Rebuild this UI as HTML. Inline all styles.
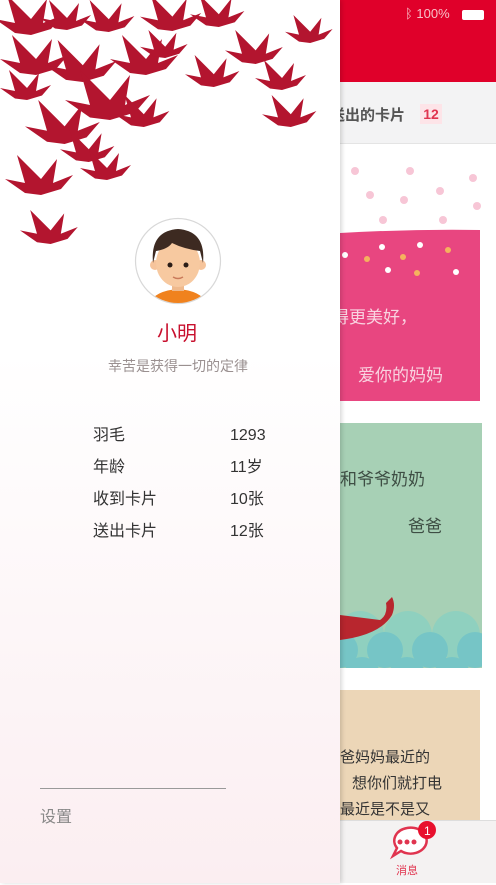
<!DOCTYPE html>
<html><head><meta charset="utf-8"><style>
*{margin:0;padding:0;box-sizing:border-box}
body{width:496px;height:883px;position:relative;overflow:hidden;font-family:"Liberation Sans","Noto Sans CJK SC",sans-serif;background:#fff}
.a{position:absolute}
</style></head><body>
<div class="a" style="left:340px;top:0;width:156px;height:82px;background:#e0002a"></div>
<div class="a" style="left:405px;top:6px;color:#f7c0c8;font-size:13px">ᛒ 100%</div>
<div class="a" style="left:462px;top:10px;width:22px;height:10px;background:#fff;border-radius:2px"></div>
<div class="a" style="left:340px;top:82px;width:156px;height:62px;background:#f3f3f4;border-bottom:1px solid #e4e4e4"></div>
<div class="a" style="left:330px;top:104px;font-size:15px;color:#555;font-weight:bold">送出的卡片</div>
<div class="a" style="left:420px;top:104px;width:22px;height:20px;background:#fde4e8;color:#e0344f;font-size:14px;font-weight:bold;text-align:center;line-height:20px">12</div>
<svg class="a" style="left:340px;top:145px" width="156" height="740">
<defs><clipPath id="cc"><rect x="0" y="278" width="142" height="245"/></clipPath></defs>
<g fill="#f7c6d6"><circle cx="15" cy="26" r="4"/><circle cx="70" cy="26" r="4"/><circle cx="133" cy="33" r="4"/><circle cx="30" cy="50" r="4"/><circle cx="64" cy="55" r="4"/><circle cx="100" cy="46" r="4"/><circle cx="137" cy="61" r="4"/><circle cx="43" cy="75" r="4"/><circle cx="103" cy="75" r="4"/></g>
<path d="M0 88 Q70 84 140 85 L140 256 L0 256Z" fill="#e84680"/>
<g fill="#fff"><circle cx="42" cy="102" r="3"/><circle cx="80" cy="100" r="3"/><circle cx="5" cy="110" r="3"/><circle cx="48" cy="125" r="3"/><circle cx="116" cy="127" r="3"/></g>
<g fill="#f5b25e"><circle cx="27" cy="114" r="3"/><circle cx="63" cy="112" r="3"/><circle cx="108" cy="105" r="3"/><circle cx="77" cy="128" r="3"/></g>
<text x="-8" y="178" fill="#f9d3e0" font-size="17" font-family="Noto Sans CJK SC">得更美好，</text>
<text x="18" y="236" fill="#f9d3e0" font-size="17" font-family="Noto Sans CJK SC">爱你的妈妈</text>
<rect x="0" y="278" width="142" height="245" fill="#a7d0b5"/>
<g clip-path="url(#cc)">
<g fill="#8fd0bf"><circle cx="20" cy="490" r="24"/><circle cx="68" cy="490" r="24"/><circle cx="116" cy="490" r="24"/></g>
<g fill="#76c5c6"><circle cx="0" cy="505" r="18"/><circle cx="45" cy="505" r="18"/><circle cx="90" cy="505" r="18"/><circle cx="135" cy="505" r="18"/><circle cx="22" cy="530" r="18"/><circle cx="67" cy="530" r="18"/><circle cx="112" cy="530" r="18"/></g>
<path d="M0 470 L40 475 Q48 470 46 458 L52 452 Q56 460 52 470 Q40 490 0 495Z" fill="#b8262e"/>
</g>
<text x="0" y="340" fill="#3e4e44" font-size="17" font-family="Noto Sans CJK SC">和爷爷奶奶</text>
<text x="68" y="387" fill="#3e4e44" font-size="17" font-family="Noto Sans CJK SC">爸爸</text>
<rect x="0" y="545" width="140" height="130" fill="#ecd6b7"/>
<text x="0" y="617" fill="#333" font-size="15" font-family="Noto Sans CJK SC">爸妈妈最近的</text>
<text x="12" y="643" fill="#333" font-size="15" font-family="Noto Sans CJK SC">想你们就打电</text>
<text x="0" y="669" fill="#333" font-size="15" font-family="Noto Sans CJK SC">最近是不是又</text>
</svg>
<div class="a" style="left:340px;top:820px;width:156px;height:63px;background:#f4f2f2;border-top:1px solid #ddd"></div>
<svg class="a" style="left:385px;top:820px" width="60" height="45"><path d="M22 8 A16 13 0 1 1 16 31 L8 36 L12 28 A16 13 0 0 1 22 8Z" fill="#fff" stroke="#e0344f" stroke-width="2.5"/><g fill="#e0344f"><circle cx="15" cy="22" r="2.5"/><circle cx="22" cy="22" r="2.5"/><circle cx="29" cy="22" r="2.5"/></g><circle cx="42" cy="10" r="9" fill="#e8102e"/><text x="39" y="15" fill="#fff" font-size="12" font-family="Liberation Sans">1</text></svg>
<div class="a" style="left:396px;top:862px;font-size:11px;color:#e0344f">消息</div>
<div class="a" style="left:0;top:0;width:340px;height:883px;background:linear-gradient(#fff 0%,#fff 40%,#fbeef1 100%);box-shadow:2px 0 4px rgba(0,0,0,.15)"></div>
<svg class="a" style="left:0;top:0" width="340" height="260">
<defs><path id="c" d="M0 12 L10 14 L6 0 L18 12 L26 2 L24 14 L34 10 L28 17 L18 20 L10 19Z"/></defs>
<g fill="#b3152f">
<use href="#c" transform="translate(-5,-5) scale(2)"/>
<use href="#c" transform="translate(40,0) scale(1.5)"/>
<use href="#c" transform="translate(80,0) scale(1.6)"/>
<use href="#c" transform="translate(140,-5) scale(1.8)"/>
<use href="#c" transform="translate(190,-5) scale(1.6)"/>
<use href="#c" transform="translate(225,30) scale(1.7)"/>
<use href="#c" transform="translate(285,15) scale(1.4)"/>
<use href="#c" transform="translate(0,35) scale(2)"/>
<use href="#c" transform="translate(45,40) scale(2.1)"/>
<use href="#c" transform="translate(110,35) scale(2)"/>
<use href="#c" transform="translate(185,55) scale(1.6)"/>
<use href="#c" transform="translate(255,60) scale(1.5)"/>
<use href="#c" transform="translate(262,95) scale(1.6)"/>
<use href="#c" transform="translate(0,70) scale(1.5)"/>
<use href="#c" transform="translate(65,70) scale(2.5)"/>
<use href="#c" transform="translate(115,95) scale(1.6)"/>
<use href="#c" transform="translate(25,100) scale(2.2)"/>
<use href="#c" transform="translate(60,130) scale(1.6)"/>
<use href="#c" transform="translate(5,155) scale(2)"/>
<use href="#c" transform="translate(80,150) scale(1.5)"/>
<use href="#c" transform="translate(20,210) scale(1.7)"/>
<use href="#c" transform="translate(140,30) scale(1.4)"/>
</g></svg>
<svg class="a" style="left:134px;top:217px" width="88" height="88">
<circle cx="44" cy="44" r="42.5" fill="#fff" stroke="#d8d8d8" stroke-width="1.2"/>
<clipPath id="k"><circle cx="44" cy="44" r="42"/></clipPath>
<g clip-path="url(#k)">
<path d="M14 90 Q18 74 44 72 Q70 74 74 90Z" fill="#f0821e"/>
<rect x="38" y="60" width="12" height="14" fill="#efb98c"/>
<circle cx="21" cy="48" r="5" fill="#f6c49b"/><circle cx="67" cy="48" r="5" fill="#f6c49b"/>
<ellipse cx="44" cy="46" rx="22" ry="24" fill="#f7c9a0"/>
<path d="M19 46 Q16 14 44 12 Q72 14 69 46 L66 34 Q50 32 38 26 Q34 32 22 34Z" fill="#3d2a21"/>
<circle cx="36" cy="48" r="2.5" fill="#2b1d17"/><circle cx="52" cy="48" r="2.5" fill="#2b1d17"/>
<path d="M39 60 Q44 63 49 60" stroke="#c97a5a" stroke-width="1.5" fill="none"/>
</g></svg>
<div class="a" style="left:0;width:354px;top:317px;text-align:center;font-size:20px;color:#c8102e">小明</div>
<div class="a" style="left:0;width:356px;top:356px;text-align:center;font-size:14px;color:#9a9090">幸苦是获得一切的定律</div>
<div class="a" style="left:93px;top:420px;font-size:16px;color:#333;line-height:32px">羽毛<br>年龄<br>收到卡片<br>送出卡片</div>
<div class="a" style="left:230px;top:420px;font-size:16px;color:#333;line-height:32px">1293<br>11岁<br>10张<br>12张</div>
<div class="a" style="left:40px;top:788px;width:186px;height:1px;background:#999"></div>
<div class="a" style="left:40px;top:803px;font-size:16px;color:#888">设置</div>
</body></html>
